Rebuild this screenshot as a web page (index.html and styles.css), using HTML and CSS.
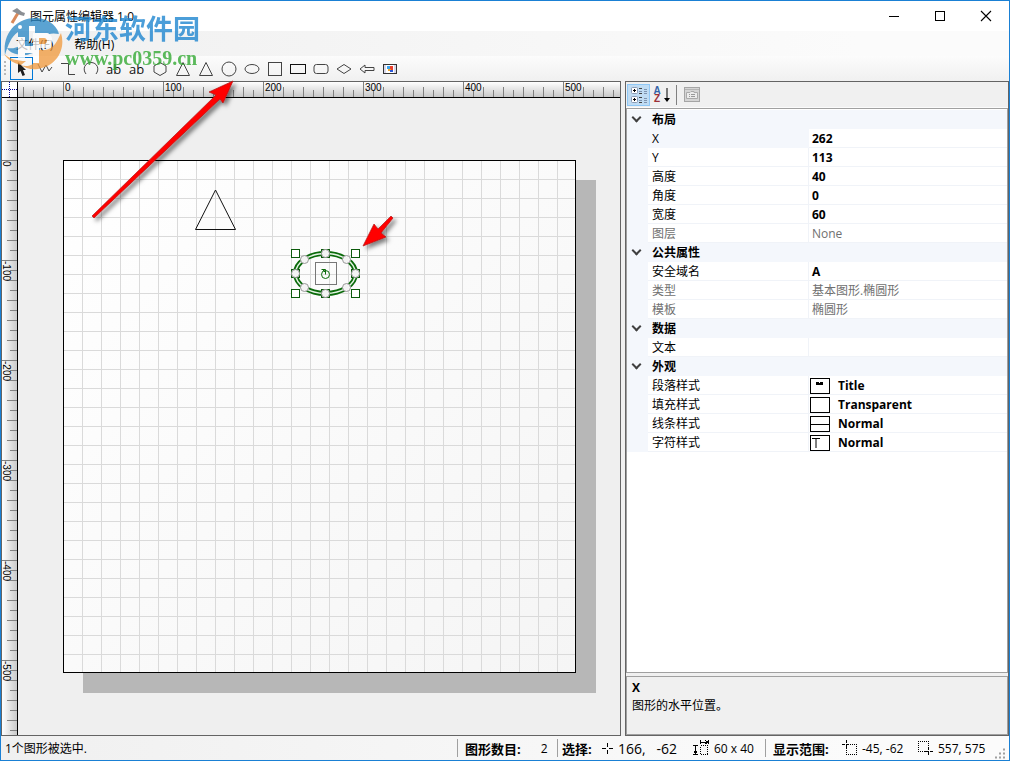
FILE: index.html
```html
<!DOCTYPE html>
<html lang="zh-CN">
<head>
  <meta charset="UTF-8">
  <title>图元属性编辑器 1.0</title>
  <link rel="stylesheet" href="styles.css">
</head>
<body>
  <div class="window">

    <header class="title-bar">
      <svg class="app-icon" width="18" height="18" viewBox="0 0 18 18">
        <path d="M9 6 L3 16" stroke="#d98a5b" stroke-width="3"/>
        <path d="M3 4 L8 1 L13 5 L16 6 L15 9 L11 8 L7 6 Z" fill="#8b8f94"/>
      </svg>
      <h1>图元属性编辑器 1.0</h1>
      <div class="window-buttons">
        <button aria-label="最小化"><svg width="12" height="12"><path d="M1 6.5H11" stroke="#000"/></svg></button>
        <button aria-label="最大化"><svg width="12" height="12"><rect x="1.5" y="1.5" width="9" height="9" fill="none" stroke="#000"/></svg></button>
        <button aria-label="关闭"><svg width="12" height="12"><path d="M1 1L11 11M11 1L1 11" stroke="#000" stroke-width="1.1"/></svg></button>
      </div>
    </header>

    <nav class="menu-bar">
      <button>文件(F)</button>
      <button>帮助(H)</button>
    </nav>

    <div class="toolbar">
      <span class="grip"></span>
      <button class="tool active" aria-label="选择"><svg viewBox="0 0 16 16"><path d="M4 1V12L6.500 10L8.500 15L11 14L9 9H12Z" fill="#1e1e1e"/></svg></button>
      <button class="tool" aria-label="折线"><svg viewBox="0 0 16 16"><path d="M1 3L5 11L9 4L12 10L15 6"/></svg></button>
      <button class="tool" aria-label="直角线"><svg viewBox="0 0 16 16"><path d="M1 2.500H8.500V13.500H15"/></svg></button>
      <button class="tool" aria-label="弧线"><svg viewBox="0 0 16 16"><path d="M3 13C-1 8 2 1.500 8 1.500S17 8 13 13"/></svg></button>
      <button class="tool text" aria-label="文本">ab</button>
      <button class="tool text" aria-label="标签">ab</button>
      <button class="tool" aria-label="多边形"><svg viewBox="0 0 16 16"><path d="M8 1.500L14 5V11L8 14.500L2 11V5Z"/></svg></button>
      <button class="tool" aria-label="三角形"><svg viewBox="0 0 16 16"><path d="M8 1.500L14.500 14.500H1.500Z"/></svg></button>
      <button class="tool" aria-label="等腰三角形"><svg viewBox="0 0 16 16"><path d="M8 1.500L14.500 14.500H1.500Z"/></svg></button>
      <button class="tool" aria-label="圆形"><svg viewBox="0 0 16 16"><circle cx="8" cy="8" r="7"/></svg></button>
      <button class="tool" aria-label="椭圆形"><svg viewBox="0 0 16 16"><ellipse cx="8" cy="8" rx="7" ry="4.500"/></svg></button>
      <button class="tool" aria-label="正方形"><svg viewBox="0 0 16 16"><rect x="1.500" y="1.500" width="13" height="13"/></svg></button>
      <button class="tool" aria-label="矩形"><svg viewBox="0 0 16 16"><rect x=".5" y="3.500" width="15" height="9" stroke="#111"/></svg></button>
      <button class="tool" aria-label="圆角矩形"><svg viewBox="0 0 16 16"><rect x="1" y="3.500" width="14" height="9" rx="2.500"/></svg></button>
      <button class="tool" aria-label="菱形"><svg viewBox="0 0 16 16"><path d="M8 3.500L15 8L8 12.500L1 8Z"/></svg></button>
      <button class="tool" aria-label="箭头"><svg viewBox="0 0 16 16"><path d="M1 8L6 4V6.500H15V9.500H6V12Z"/></svg></button>
      <button class="tool" aria-label="图片"><svg viewBox="0 0 16 16">
        <rect x="1.500" y="3.500" width="13" height="9" fill="#d8d8ea" stroke="#333"/>
        <rect x="4" y="4" width="8" height="8" fill="#fff" stroke="none"/>
        <rect x="5" y="5" width="3" height="3" fill="#3ba4ee" stroke="none"/>
        <rect x="8" y="5" width="3" height="4" fill="#e8402f" stroke="none"/>
        <rect x="6" y="8" width="3" height="2" fill="#f4a52a" stroke="none"/>
        <rect x="8" y="9" width="3" height="2" fill="#2a57d8" stroke="none"/>
      </svg></button>
    </div>

    <main class="workspace">
      <section class="designer">
        <div class="ruler-corner">
          <svg class="crisp" width="15" height="15"><path d="M7.500 0V15M0 7.500H15" stroke="#00009a" stroke-dasharray="1 1"/></svg>
        </div>

        <svg class="ruler-top" width="100%" height="15">
          <defs>
            <linearGradient id="shadeTop" x1="0" y1="0" x2="0" y2="1">
              <stop offset="0" stop-color="#fff"/><stop offset="1" stop-color="#c9c9c9"/>
            </linearGradient>
            <pattern id="ticksTop" x="45" y="0" width="100" height="15" patternUnits="userSpaceOnUse">
              <path d="M.5 0V15M20.500 5V15M40.500 5V15M60.500 5V15M80.500 5V15M10.500 8V15M30.500 8V15M50.500 8V15M70.500 8V15M90.500 8V15" stroke="#808080"/>
            </pattern>
          </defs>
          <rect width="100%" height="15" fill="url(#shadeTop)"/>
          <rect width="100%" height="15" fill="url(#ticksTop)"/>
          <text x="47" y="9">0</text>
          <text x="147" y="9">100</text>
          <text x="247" y="9">200</text>
          <text x="347" y="9">300</text>
          <text x="447" y="9">400</text>
          <text x="547" y="9">500</text>
        </svg>

        <svg class="ruler-left" width="15" height="100%">
          <defs>
            <linearGradient id="shadeLeft">
              <stop offset="0" stop-color="#fff"/><stop offset="1" stop-color="#c9c9c9"/>
            </linearGradient>
            <pattern id="ticksLeft" x="0" y="62" width="15" height="100" patternUnits="userSpaceOnUse">
              <path d="M0 .5H15M5 20.500H15M5 40.500H15M5 60.500H15M5 80.500H15M8 10.500H15M8 30.500H15M8 50.500H15M8 70.500H15M8 90.500H15" stroke="#808080"/>
            </pattern>
          </defs>
          <rect width="15" height="100%" fill="url(#shadeLeft)"/>
          <rect width="15" height="100%" fill="url(#ticksLeft)"/>
          <text transform="translate(1 63) rotate(90)">0</text>
          <text transform="translate(1 163) rotate(90)">-100</text>
          <text transform="translate(1 263) rotate(90)">-200</text>
          <text transform="translate(1 363) rotate(90)">-300</text>
          <text transform="translate(1 463) rotate(90)">-400</text>
          <text transform="translate(1 563) rotate(90)">-500</text>
        </svg>

        <div class="canvas">
          <svg width="100%" height="100%">
            <defs>
              <linearGradient id="paper" x1="0" y1="0" x2="1" y2="1">
                <stop offset="0" stop-color="#fff"/><stop offset="1" stop-color="#f5f5f5"/>
              </linearGradient>
              <pattern id="grid" x="45" y="62" width="19" height="19" patternUnits="userSpaceOnUse">
                <path d="M.5 0V19M0 .5H19" stroke="#dadada" fill="none"/>
              </pattern>
            </defs>

            <!-- page with its shadow -->
            <rect x="65" y="82" width="513" height="513" fill="#b7b7b7"/>
            <rect x="45.500" y="62.500" width="512" height="512" fill="url(#paper)"/>
            <rect x="45.500" y="62.500" width="512" height="512" fill="url(#grid)" stroke="#000"/>

            <path d="M197.500 92L217.500 131.500H177.500Z" fill="none" stroke="#111"/>

            <!-- selected ellipse -->
            <g transform="translate(307.500 175.500)" fill="none">
              <ellipse rx="30" ry="20" stroke="#0b6b0b" stroke-width="5"/>
              <ellipse rx="30" ry="20" stroke="#e4f4e4" stroke-width="1.400"/>
              <rect x="-10" y="-11" width="21" height="22" stroke="#777"/>
              <circle r="4" cy="1" stroke="#0b6b0b"/>
              <path d="M-4 -4H0V1M-3 -4L0 -1" stroke="#0b6b0b"/>
              <g fill="#fff" stroke="#0b5a0b">
                <rect x="-34" y="-24" width="8" height="8"/>
                <rect x="26" y="-24" width="8" height="8"/>
                <rect x="-34" y="16" width="8" height="8"/>
                <rect x="26" y="16" width="8" height="8"/>
                <rect x="-4" y="-24" width="8" height="8"/>
                <rect x="-4" y="16" width="8" height="8"/>
                <rect x="-34" y="-4" width="8" height="8"/>
                <rect x="26" y="-4" width="8" height="8"/>
              </g>
              <g fill="#f4f4f4" stroke="#999">
                <circle cx="0" cy="-20" r="4"/>
                <circle cx="0" cy="20" r="4"/>
                <circle cx="-30" cy="0" r="4"/>
                <circle cx="30" cy="0" r="4"/>
                <circle cx="-21" cy="-14" r="4"/>
                <circle cx="21" cy="-14" r="4"/>
                <circle cx="-21" cy="14" r="4"/>
                <circle cx="21" cy="14" r="4"/>
              </g>
            </g>
          </svg>
        </div>
      </section>

      <aside class="properties">
        <div class="prop-toolbar">
          <button class="active" aria-label="按分类顺序">
            <svg width="18" height="18">
              <g fill="#fff" stroke="#8a9bb5"><rect x="1.500" y="1.500" width="6" height="6" rx="1"/><rect x="1.500" y="10.500" width="6" height="6" rx="1"/></g>
              <path d="M3 4.500H6M4.500 3V6M3 13.500H6M4.500 12V15" stroke="#000"/>
              <path d="M9 2.500H12M9 7.500H12M9 11.500H12M9 16.500H12" stroke="#444"/>
              <path d="M9 5.500H12M9 14.500H12M14 3.500H17M14 5.500H17M14 7.500H17M14 12.500H17M14 14.500H17M14 16.500H17" stroke="#7e93ae"/>
            </svg>
          </button>
          <button class="sort" aria-label="按字母顺序">
            <span class="az"><b>A</b><b>Z</b></span>
            <svg width="6" height="18"><path d="M3 2V14" stroke="#000"/><path d="M0 12H6L3 16Z"/></svg>
          </button>
          <span class="divider"></span>
          <button aria-label="属性页" disabled>
            <svg width="16" height="16">
              <rect x=".5" y=".5" width="15" height="14" fill="#d5d5d5" stroke="#a5a5a5"/>
              <path d="M1 2.500H15" stroke="#b5b5b5"/>
              <path d="M2.500 5.500H6L7 4.500H10V5.500H13.500V11.500H2.500Z" fill="#ececec" stroke="#aaa"/>
              <path d="M5 7.500H6M7 7.500H11M5 9.500H6M7 9.500H11" stroke="#999"/>
            </svg>
          </button>
        </div>

        <div class="prop-grid">
          <table>
            <colgroup><col class="col-gutter"><col class="col-name"><col></colgroup>
            <tbody>
              <tr class="category"><td><button class="fold" aria-label="折叠布局"></button></td><th colspan="2">布局</th></tr>
              <tr class="selected"><td></td><th>X</th><td>262</td></tr>
              <tr><td></td><th>Y</th><td>113</td></tr>
              <tr><td></td><th>高度</th><td>40</td></tr>
              <tr><td></td><th>角度</th><td>0</td></tr>
              <tr><td></td><th>宽度</th><td>60</td></tr>
              <tr class="readonly"><td></td><th>图层</th><td>None</td></tr>
            </tbody>
            <tbody>
              <tr class="category"><td><button class="fold" aria-label="折叠公共属性"></button></td><th colspan="2">公共属性</th></tr>
              <tr><td></td><th>安全域名</th><td>A</td></tr>
              <tr class="readonly"><td></td><th>类型</th><td>基本图形.椭圆形</td></tr>
              <tr class="readonly"><td></td><th>模板</th><td>椭圆形</td></tr>
            </tbody>
            <tbody>
              <tr class="category"><td><button class="fold" aria-label="折叠数据"></button></td><th colspan="2">数据</th></tr>
              <tr><td></td><th>文本</th><td></td></tr>
            </tbody>
            <tbody>
              <tr class="category"><td><button class="fold" aria-label="折叠外观"></button></td><th colspan="2">外观</th></tr>
              <tr><td></td><th>段落样式</th><td><div class="style-value"><svg class="swatch" width="20" height="16"><path d="M5 3.500H8M9 3.500H12M5 5.500H12M5 4.500H12" stroke="#000"/></svg>Title</div></td></tr>
              <tr><td></td><th>填充样式</th><td><div class="style-value"><svg class="swatch" width="20" height="16"></svg>Transparent</div></td></tr>
              <tr><td></td><th>线条样式</th><td><div class="style-value"><svg class="swatch" width="20" height="16"><path d="M0 7.500H18" stroke="#000"/></svg>Normal</div></td></tr>
              <tr><td></td><th>字符样式</th><td><div class="style-value"><svg class="swatch" width="20" height="16"><path d="M1 2.500H9M5 2.500V12" stroke="#000"/></svg>Normal</div></td></tr>
            </tbody>
          </table>
        </div>

        <div class="prop-help">
          <b>X</b>
          <p>图形的水平位置。</p>
        </div>
      </aside>
    </main>

    <footer class="status-bar">
      <span class="message">1个图形被选中.</span>
      <div class="cell count"><b>图形数目:</b><span>2</span></div>
      <div class="cell selection">
        <b>选择:</b>
        <svg width="11" height="11"><path d="M5.500 0V4M5.500 7V11M0 5.500H4M7 5.500H11" stroke="#000"/></svg>
        <span class="pos">166,&nbsp;&nbsp; -62</span>
        <svg class="crisp" width="17" height="16">
          <path d="M7.500 5.500H14.500V14.500H7.500Z" fill="none" stroke="#000" stroke-dasharray="1 1"/>
          <path d="M7.500 0V4M15.500 0V4M8 2.500H15M12 0L15 2.500L12 4M0 5.500H5M0 14.500H5M2.500 6V14M1 11L2.500 14L4 11" fill="none" stroke="#000"/>
        </svg>
        <span>60 x 40</span>
      </div>
      <div class="cell range">
        <b>显示范围:</b>
        <svg class="crisp" width="16" height="16">
          <path d="M4 4.500H15M4 14.500H15M4.500 4V15M14.500 4V15" stroke="#000" stroke-dasharray="1 1"/>
          <path d="M4.500 0V3M4.500 5V8M0 4.500H3M5 4.500H7" stroke="#000"/>
        </svg>
        <span class="from">-45, -62</span>
        <svg class="crisp" width="16" height="16">
          <path d="M0 1.500H11M0 11.500H11M.5 1V12M10.500 1V12" stroke="#000" stroke-dasharray="1 1"/>
          <path d="M10.500 7V10M10.500 12V15M7 11.500H10M12 11.500H15" stroke="#000"/>
        </svg>
        <span>557, 575</span>
      </div>
      <svg class="resize" width="12" height="12"><path d="M8 1.500H10M4 5.500H6M8 5.500H10M0 9.500H2M4 9.500H6M8 9.500H10" stroke="#a0a0a0" stroke-width="2"/></svg>
    </footer>
  </div>

  <!-- site watermark and red pointer arrows over the window -->
  <div class="watermark">
    <svg width="62" height="64" viewBox="0 0 62 64">
      <path d="M3 45C0 22 16 7 35 8C46 9 53 14 57 23C51 17 44 15 37 16H27V35H16V22C9 27 6 35 3 45Z" fill="#2585c4"/>
      <path d="M5 38C15 40 20 33 27 33H33V16C45 12 54 16 57 24C46 22 39 25 38 41C30 42 27 46 20 45C13 44 8 43 5 38Z" fill="#2585c4"/>
      <path d="M59 23C64 39 55 56 36 59C29 60 23 58 19 55C23 57 28 56 31 54V40H43C52 39 55 31 59 23Z" fill="#f0983a"/>
      <path d="M2 44C8 49 15 51 24 51L19 55C11 53 5 49 2 44Z" fill="#f0983a"/>
      <path d="M16 27H23V36H31V23H45C52 24 52 37 44 38H37V53H31V43H23V49H16Z" fill="#fff"/>
      <path d="M37 28H42C46 28 46 34 42 34H37Z" fill="#f0983a"/>
      <circle cx="18" cy="17" r="2" fill="#fff"/>
    </svg>
    <div class="watermark-text">
      <strong>河东软件园</strong>
      <em>www.pc0359.cn</em>
    </div>
  </div>
  <svg class="pointers" width="400" height="260">
    <defs>
      <filter id="soft" x="-20%" y="-20%" width="140%" height="140%">
        <feDropShadow dx="3" dy="3" stdDeviation="2" flood-color="#000" flood-opacity="0.5"/>
      </filter>
    </defs>
    <g fill="#ff0000" stroke="#b01818" stroke-width=".7" filter="url(#soft)">
      <path d="M233 81L223 103L220 99L94 218L92 216L216 95L209 92Z"/>
      <path d="M363 246L374 224L378 229L391 216L393 218L381 233L386 237Z"/>
    </g>
  </svg>
</body>
</html>
```
FILE: styles.css
```css
* {
  box-sizing: border-box;
}

body {
  margin: 0;
  font-family: "Open Sans", "Noto Sans CJK SC", sans-serif;
  font-size: 12px;
  color: #000;
}

button {
  border: 0;
  padding: 0;
  background: none;
  font: inherit;
  color: inherit;
}

svg {
  display: block;
  flex: none;
}

.crisp {
  shape-rendering: crispEdges;
}

.window {
  display: flex;
  flex-direction: column;
  height: 100vh;
  border: 1px solid #1a80d4;
  background: #f0f0f0;
}

/* title and menu */
.title-bar {
  display: flex;
  align-items: center;
  height: 30px;
  padding-left: 8px;
  background: #fff;
}

.title-bar h1 {
  margin: 0 auto 0 3px;
  font-size: 12px;
  font-weight: normal;
}

.window-buttons {
  display: flex;
}

.window-buttons button {
  display: grid;
  place-items: center;
  width: 46px;
  height: 29px;
}

.menu-bar {
  display: flex;
  gap: 21px;
  height: 25px;
  padding-left: 15px;
  background: linear-gradient(90deg, #f0f0f0, #fbfbfb 85%);
}

.toolbar {
  display: flex;
  align-items: center;
  height: 25px;
  padding-left: 3px;
  background: linear-gradient(#fcfcfc, #f0f0f0);
}

.toolbar .grip {
  width: 2px;
  height: 16px;
  margin-right: 4px;
  background: repeating-linear-gradient(#b8b8b8 0 2px, transparent 2px 4px);
}

.tool {
  display: grid;
  place-items: center;
  width: 23px;
  height: 23px;
}

.tool svg {
  width: 16px;
  height: 16px;
  fill: none;
  stroke: #444;
}

.tool.active {
  border: 1px solid #0078d7;
}

.tool.active svg {
  stroke: none;
}

.tool.text {
  font-size: 13px;
  color: #111;
}

/* work area */
.workspace {
  display: grid;
  grid-template-columns: 620fr 384fr;
  gap: 4px;
  flex: 1;
  min-height: 0;
}

.designer {
  display: grid;
  grid-template-columns: 16px 1fr;
  grid-template-rows: 16px 1fr;
  min-width: 0;
  min-height: 0;
  border: 1px solid #646464;
}

.ruler-corner {
  border-right: 1px solid #000;
  border-bottom: 1px solid #000;
  background: #fff;
}

.ruler-top {
  height: 16px;
  border-bottom: 1px solid #000;
}

.ruler-left {
  width: 16px;
  border-right: 1px solid #000;
}

.ruler-top text,
.ruler-left text {
  font-family: "Liberation Sans", sans-serif;
  font-size: 10px;
}

.canvas {
  overflow: hidden;
  background: #efefef;
}

/* properties */
.properties {
  display: flex;
  flex-direction: column;
  min-width: 0;
  border: 1px solid #646464;
}

.prop-toolbar {
  display: flex;
  align-items: center;
  height: 26px;
  padding: 1px 0 0 1px;
  border-bottom: 1px solid #fbfbfb;
}

.prop-toolbar button {
  display: grid;
  place-items: center;
  width: 23px;
  height: 22px;
}

.prop-toolbar .active {
  border: 1px solid #90c8f6;
  background: #c0dcf3;
}

.prop-toolbar .sort {
  display: flex;
  align-items: center;
  justify-content: center;
  gap: 3px;
}

.az b {
  display: block;
  font-family: "Liberation Sans", sans-serif;
  font-size: 10px;
  line-height: 8px;
  color: #3565a8;
}

.az b + b {
  color: #9c3036;
}

.prop-toolbar .divider {
  width: 1px;
  height: 20px;
  margin: 0 3px;
  background: #808080;
}

.prop-grid {
  flex: 1;
  min-height: 0;
  padding-top: 1px;
  overflow: hidden;
  border: 1px solid #a0a0a0;
  background: #fff;
}

.prop-grid table {
  width: 100%;
  table-layout: fixed;
  border-collapse: separate;
  border-spacing: 0;
}

.col-gutter {
  width: 21px;
}

.col-name {
  width: 161px;
}

.prop-grid th,
.prop-grid td {
  height: 19px;
  padding: 1px 0 0 3px;
  border-bottom: 1px solid #f0f3f8;
  line-height: 17px;
  text-align: left;
  white-space: nowrap;
}

.prop-grid th {
  padding-left: 4px;
  border-right: 1px solid #f0f3f8;
  font-weight: normal;
}

.prop-grid td {
  font-weight: bold;
}

.prop-grid td:first-child,
.prop-grid .category th,
.prop-grid .selected th {
  border-color: #f4f7fc;
  background: #f4f7fc;
}

.prop-grid .category th {
  font-weight: bold;
}

.prop-grid .readonly th,
.prop-grid .readonly td {
  font-weight: normal;
  color: #707070;
}

.fold {
  display: block;
  width: 7px;
  height: 7px;
  margin: -5px 0 0 3px;
  border: solid #404040;
  border-width: 0 2px 2px 0;
  transform: rotate(45deg);
}

.style-value {
  display: flex;
  align-items: center;
  gap: 8px;
  height: 17px;
  margin-left: -2px;
}

.swatch {
  border: 1px solid #000;
}

.prop-help {
  height: 59px;
  margin-top: 3px;
  padding: 2px 5px;
  border: 1px solid #a0a0a0;
  line-height: 18px;
}

.prop-help p {
  margin: 0;
}

/* status bar */
.status-bar {
  display: flex;
  align-items: center;
  height: 24px;
  background: linear-gradient(90deg, #f0f0f0, #fbfbfb 85%);
}

.message {
  flex: 1;
  padding-left: 4px;
}

.cell {
  display: flex;
  align-items: center;
  height: 18px;
  border-left: 1px solid #a0a0a0;
  white-space: nowrap;
}

.cell b {
  font-size: 13px;
}

.count {
  width: 100px;
  gap: 20px;
  padding-left: 7px;
}

.selection {
  width: 208px;
  gap: 4px;
  padding-left: 4px;
}

.selection b {
  width: 36px;
}

.pos {
  width: 72px;
  padding-left: 1px;
  font-size: 14px;
}

.range {
  width: 230px;
  gap: 4px;
  padding-left: 7px;
}

.range b {
  width: 65px;
}

.from {
  width: 52px;
}

.resize {
  align-self: flex-end;
  width: 12px;
  margin-right: 2px;
}

/* overlays */
.watermark {
  position: absolute;
  top: 10px;
  left: 2px;
  display: flex;
  gap: 1px;
  pointer-events: none;
}

.watermark svg {
  opacity: 0.75;
}

.watermark-text {
  opacity: 0.8;
}

.watermark-text strong {
  display: block;
  font-size: 27px;
  line-height: 38px;
  color: #1f86d0;
}

.watermark-text em {
  display: block;
  font: bold 20px/20px "Liberation Serif", serif;
  color: #35aa35;
}

.pointers {
  position: absolute;
  top: 0;
  left: 0;
  pointer-events: none;
}
```
